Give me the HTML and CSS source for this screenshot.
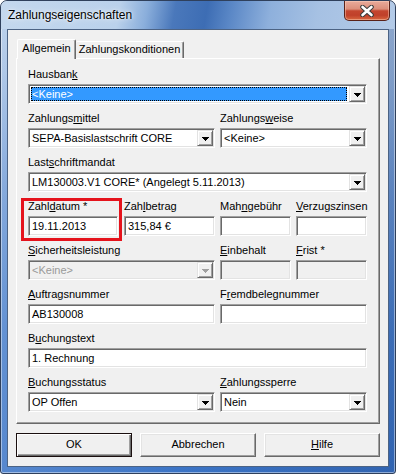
FILE: index.html
```html
<!DOCTYPE html>
<html lang="de">
<head>
<meta charset="utf-8">
<title>Zahlungseigenschaften</title>
<link rel="stylesheet" href="styles.css">
</head>
<body>
<div class="window">
  <div class="titlebar">
    <span class="title">Zahlungseigenschaften</span>
    <div class="close">
      <svg width="14" height="12" viewBox="0 0 14 12">
        <path d="M2.5 2 L11.5 10 M11.5 2 L2.5 10" stroke="#3b3b3b" stroke-width="4.6" stroke-linecap="round" fill="none"/>
        <path d="M2.5 2 L11.5 10 M11.5 2 L2.5 10" stroke="#ffffff" stroke-width="2.6" stroke-linecap="round" fill="none"/>
      </svg>
    </div>
  </div>
  <div class="client">
    <div class="tabs">
      <div class="tab active">Allgemein</div>
      <div class="tab second">Zahlungskonditionen</div>
    </div>
    <div class="panel">
      <div class="form">
        <div class="f s4">
          <label>Hausban<u>k</u></label>
          <div class="combo"><span class="text sel">&lt;Keine&gt;</span><span class="drop"><svg width="7" height="4" viewBox="0 0 7 4"><path d="M0 0h7v1H0zM1 1h5v1H1zM2 2h3v1H2zM3 3h1v1H3z"/></svg></span></div>
        </div>
        <div class="f s2">
          <label>Zahlungs<u>m</u>ittel</label>
          <div class="combo"><span class="text">SEPA-Basislastschrift CORE</span><span class="drop"><svg width="7" height="4" viewBox="0 0 7 4"><path d="M0 0h7v1H0zM1 1h5v1H1zM2 2h3v1H2zM3 3h1v1H3z"/></svg></span></div>
        </div>
        <div class="f s2">
          <label>Zahlungs<u>w</u>eise</label>
          <div class="combo"><span class="text">&lt;Keine&gt;</span><span class="drop"><svg width="7" height="4" viewBox="0 0 7 4"><path d="M0 0h7v1H0zM1 1h5v1H1zM2 2h3v1H2zM3 3h1v1H3z"/></svg></span></div>
        </div>
        <div class="f s4">
          <label>Last<u>s</u>chriftmandat</label>
          <div class="combo"><span class="text">LM130003.V1 CORE* (Angelegt 5.11.2013)</span><span class="drop"><svg width="7" height="4" viewBox="0 0 7 4"><path d="M0 0h7v1H0zM1 1h5v1H1zM2 2h3v1H2zM3 3h1v1H3z"/></svg></span></div>
        </div>
        <div class="f hl">
          <label>Zahl<u>d</u>atum *</label>
          <div class="edit">19.11.2013</div>
        </div>
        <div class="f">
          <label>Zah<u>l</u>betrag</label>
          <div class="edit">315,84 €</div>
        </div>
        <div class="f">
          <label>Mah<u>n</u>gebühr</label>
          <div class="edit"></div>
        </div>
        <div class="f">
          <label><u>V</u>erzugszinsen</label>
          <div class="edit"></div>
        </div>
        <div class="f s2">
          <label><u>S</u>icherheitsleistung</label>
          <div class="combo disabled"><span class="text">&lt;Keine&gt;</span><span class="drop"><svg width="7" height="4" viewBox="0 0 7 4"><path d="M0 0h7v1H0zM1 1h5v1H1zM2 2h3v1H2zM3 3h1v1H3z"/></svg></span></div>
        </div>
        <div class="f">
          <label><u>E</u>inbehalt</label>
          <div class="edit disabled"></div>
        </div>
        <div class="f">
          <label><u>F</u>rist *</label>
          <div class="edit disabled"></div>
        </div>
        <div class="f s2">
          <label><u>A</u>uftragsnummer</label>
          <div class="edit">AB130008</div>
        </div>
        <div class="f s2">
          <label>F<u>r</u>emdbelegnummer</label>
          <div class="edit"></div>
        </div>
        <div class="f s4">
          <label>B<u>u</u>chungstext</label>
          <div class="edit">1. Rechnung</div>
        </div>
        <div class="f s2">
          <label><u>B</u>uchungsstatus</label>
          <div class="combo"><span class="text">OP Offen</span><span class="drop"><svg width="7" height="4" viewBox="0 0 7 4"><path d="M0 0h7v1H0zM1 1h5v1H1zM2 2h3v1H2zM3 3h1v1H3z"/></svg></span></div>
        </div>
        <div class="f s2">
          <label><u>Z</u>ahlungssperre</label>
          <div class="combo"><span class="text">Nein</span><span class="drop"><svg width="7" height="4" viewBox="0 0 7 4"><path d="M0 0h7v1H0zM1 1h5v1H1zM2 2h3v1H2zM3 3h1v1H3z"/></svg></span></div>
        </div>
      </div>
    </div>
    <div class="buttons">
      <div class="btn default">OK</div>
      <div class="btn">Abbrechen</div>
      <div class="btn"><u>H</u>ilfe</div>
    </div>
  </div>
</div>
</body>
</html>
```
FILE: styles.css
```css
* { box-sizing: border-box; }
html, body { margin: 0; padding: 0; }
body {
  width: 396px;
  height: 474px;
  overflow: hidden;
  background: #ffffff;
  font-family: "Liberation Sans", Arial, sans-serif;
  font-size: 11px;
  color: #000;
}
u { text-decoration: underline; text-underline-offset: 1px; text-decoration-thickness: 1px; }

.window {
  width: 396px;
  height: 474px;
  border: 1px solid #2f405c;
  border-radius: 7px 7px 3px 3px;
  background:
    linear-gradient(to right, rgba(255,255,255,.14), rgba(255,255,255,0) 45%, rgba(10,40,100,.22) 100%),
    linear-gradient(to bottom, #b6cdea 0%, #a2bfe4 15%, #6f9ad6 42%, #4a80cc 70%, #3b74c6 100%);
  box-shadow: inset 0 0 0 1px rgba(255,255,255,.45);
  overflow: hidden;
  display: flex;
  flex-direction: column;
}

.titlebar {
  height: 28px;
  flex: none;
  display: flex;
  align-items: flex-start;
  justify-content: space-between;
  background: linear-gradient(100deg, #c4d8ee 0%, #bad1eb 30%, #8aaedb 37%, #4a78bb 44%, #3d6db4 52%, #5a87c6 58%, #8eb0dc 68%, #a6c1e3 80%, #b4cbe8 100%);
  border-radius: 6px 6px 0 0;
}
.title {
  padding-left: 7px;
  line-height: 28px;
  font-size: 12px;
  text-shadow: 0 0 6px rgba(255,255,255,.9), 0 0 2px rgba(255,255,255,.8);
}
.close {
  width: 46px;
  height: 20px;
  margin-right: 5px;
  border: 1px solid #5a2219;
  border-top: none;
  border-radius: 0 0 5px 5px;
  background: linear-gradient(to bottom, #e9ab9b 0%, #dc8f7b 42%, #c4462f 52%, #c0402a 75%, #d8673f 100%);
  box-shadow: inset 0 0 0 1px rgba(255,215,195,.45);
  display: flex;
  align-items: center;
  justify-content: center;
}
.close svg { display: block; }

.client {
  margin: 0 6px;
  height: 438px;
  border: 1px solid #4c6384;
  background: #f0f0f0;
  padding: 9px 8px;
  display: flex;
  flex-direction: column;
}

.tabs {
  height: 19px;
  flex: none;
  display: flex;
  align-items: flex-end;
  padding-left: 1px;
  position: relative;
  z-index: 1;
}
.tab {
  height: 17px;
  line-height: 15px;
  text-align: center;
  white-space: nowrap;
  background: #f0f0f0;
  border-top: 1px solid #ffffff;
  border-right: 1px solid #696969;
  box-shadow: inset -1px 0 #a0a0a0;
  border-radius: 2px 2px 0 0;
}
.tab.active {
  width: 59px;
  height: 20px;
  margin-bottom: -1px;
  line-height: 16px;
  border-left: 1px solid #ffffff;
}
.tab.second { width: 108px; }

.panel {
  height: 366px;
  flex: none;
  border: 1px solid;
  border-color: #ffffff #696969 #696969 #ffffff;
  box-shadow: inset -1px -1px #a0a0a0;
  padding: 9px 12px 0 11px;
}
.form {
  display: grid;
  grid-template-columns: 91px 91px 71px 71px;
  column-gap: 5px;
  row-gap: 8px;
}
.f { display: flex; flex-direction: column; position: relative; min-width: 0; }
.s2 { grid-column: span 2; }
.s4 { grid-column: span 4; }
.f label { display: block; height: 16px; line-height: 13px; white-space: nowrap; }

.hl .edit { width: 90px; }
.hl::after {
  content: "";
  position: absolute;
  top: -2px;
  left: -7px;
  right: -3px;
  bottom: -5px;
  border: 3px solid #e5131c;
  pointer-events: none;
}

.edit, .combo {
  height: 20px;
  border: 1px solid;
  border-color: #a0a0a0 #ffffff #ffffff #a0a0a0;
  box-shadow: inset 1px 1px #696969, inset -1px -1px #e3e3e3;
  background: #ffffff;
  white-space: nowrap;
  overflow: hidden;
}
.edit {
  padding: 2px 1px 0 3px;
  line-height: 15px;
}
.edit.disabled, .combo.disabled { background: #f0f0f0; }

.combo {
  padding: 1px;
  display: flex;
}
.combo .text {
  flex: 1;
  min-width: 0;
  height: 16px;
  padding: 1px 0 0 2px;
  line-height: 15px;
  overflow: hidden;
}
.combo .text.sel {
  margin: 1px 2px 1px 1px;
  height: 14px;
  border: 1px dotted #000;
  background: #3399ff;
  color: #ffffff;
  padding: 1px 0 0 0;
  line-height: 11px;
}
.combo.disabled .text { color: #9a9a9a; }
.drop {
  flex: none;
  width: 16px;
  height: 16px;
  background: #f0f0f0;
  border: 1px solid;
  border-color: #e3e3e3 #696969 #696969 #e3e3e3;
  box-shadow: inset 1px 1px #ffffff, inset -1px -1px #a0a0a0;
}
.drop svg { display: block; margin: 6px 0 0 4px; fill: #000; }
.combo.disabled .drop svg { fill: #a0a0a0; }

.buttons {
  margin-top: 9px;
  display: flex;
  gap: 8px;
}
.btn {
  width: 116px;
  height: 24px;
  line-height: 21px;
  text-align: center;
  background: #f0f0f0;
  border: 1px solid;
  border-color: #ffffff #696969 #696969 #ffffff;
  box-shadow: inset -1px -1px #a0a0a0, inset 1px 1px #e3e3e3;
}
.btn.default {
  border: 1px solid #1a0f0f;
  box-shadow: inset 1px 1px #ffffff, inset -1px -1px #696969, inset -2px -2px #a0a0a0;
}
```
